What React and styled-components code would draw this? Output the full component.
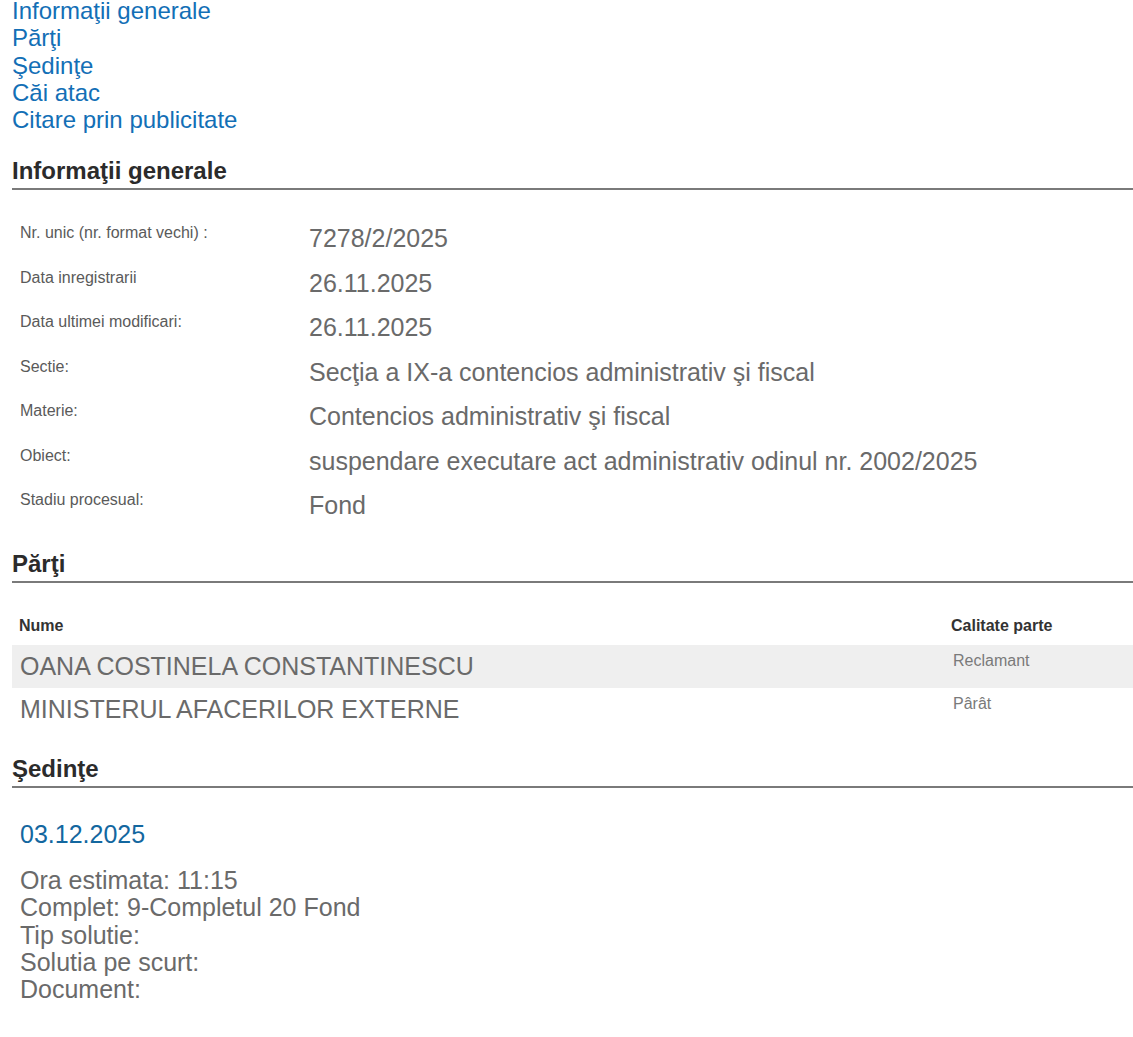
import React from 'react';
import styled, { createGlobalStyle } from 'styled-components';

const GlobalStyle = createGlobalStyle`
  html, body {
    margin: 0;
    padding: 0;
    background: #fff;
  }
  body {
    font-family: "Liberation Sans", Arial, Helvetica, sans-serif;
    overflow: hidden;
  }
`;

const info = [
  ['Nr. unic (nr. format vechi) :', '7278/2/2025'],
  ['Data inregistrarii', '26.11.2025'],
  ['Data ultimei modificari:', '26.11.2025'],
  ['Sectie:', 'Secţia a IX-a contencios administrativ şi fiscal'],
  ['Materie:', 'Contencios administrativ şi fiscal'],
  ['Obiect:', 'suspendare executare act administrativ odinul nr. 2002/2025'],
  ['Stadiu procesual:', 'Fond'],
];

const parti = [
  { nume: 'OANA COSTINELA CONSTANTINESCU', calitate: 'Reclamant' },
  { nume: 'MINISTERUL AFACERILOR EXTERNE', calitate: 'Pârât' },
];

const sedinta = [
  'Ora estimata: 11:15',
  'Complet: 9-Completul 20 Fond',
  'Tip solutie:',
  'Solutia pe scurt:',
  'Document:',
];

const App = () => {
  return (
    <Page>
      <GlobalStyle />
      <Nav>
        <NavLink href="#info">Informaţii generale</NavLink>
        <NavLink href="#parti">Părţi</NavLink>
        <NavLink href="#sedinte">Şedinţe</NavLink>
        <NavLink href="#cai">Căi atac</NavLink>
        <NavLink href="#citare">Citare prin publicitate</NavLink>
      </Nav>

      <SectionTitle id="info" $gap={24}>Informaţii generale</SectionTitle>
      <InfoTable>
        {info.map(([label, value]) => (
          <InfoRow key={label}>
            <InfoLabel>{label}</InfoLabel>
            <InfoValue>{value}</InfoValue>
          </InfoRow>
        ))}
      </InfoTable>

      <SectionTitle id="parti" $gap={22}>Părţi</SectionTitle>
      <PartiTable>
        <PartiHead>
          <HeadCell>Nume</HeadCell>
          <HeadCell>Calitate parte</HeadCell>
        </PartiHead>
        {parti.map((p, index) => (
          <PartiRow key={p.nume} $shaded={index % 2 === 0}>
            <PartiName>{p.nume}</PartiName>
            <PartiRole>{p.calitate}</PartiRole>
          </PartiRow>
        ))}
      </PartiTable>

      <SectionTitle id="sedinte" $gap={24}>Şedinţe</SectionTitle>
      <Sedinta>
        <SedintaDate>03.12.2025</SedintaDate>
        <SedintaDetails>
          {sedinta.map(line => (
            <DetailLine key={line}>{line}</DetailLine>
          ))}
        </SedintaDetails>
      </Sedinta>
    </Page>
  );
};

export default App;

const Page = styled.div`
  padding-left: 12px;
  width: 1121px;
  height: 1037px;
  margin-top: -3px;
`;

const Nav = styled.div`
  display: flex;
  flex-direction: column;
  align-items: flex-start;
`;

const NavLink = styled.a`
  font-size: 24px;
  line-height: 27.3px;
  color: #136fb6;
  text-decoration: none;
`;

const SectionTitle = styled.div`
  font-size: 24px;
  font-weight: 700;
  line-height: 28px;
  color: #2b2b2b;
  margin-top: ${({ $gap }) => $gap}px;
  padding-bottom: 3px;
  border-bottom: 2px solid #7a7a7a;
`;

const InfoTable = styled.div`
  margin-top: 26px;
  display: flex;
  flex-direction: column;
`;

const InfoRow = styled.div`
  display: grid;
  grid-template-columns: 297px 1fr;
  align-items: start;
  height: 44.5px;
  box-sizing: border-box;
  padding-top: 8px;
`;

const InfoLabel = styled.div`
  padding-left: 8px;
  font-size: 16px;
  line-height: 18px;
  color: #5a5a5a;
`;

const InfoValue = styled.div`
  font-size: 25px;
  line-height: 29px;
  color: #6a6a6a;
`;

const PartiTable = styled.div`
  margin-top: 34px;
  display: flex;
  flex-direction: column;
`;

const PartiHead = styled.div`
  display: grid;
  grid-template-columns: 932px 1fr;
  height: 28px;
  padding-left: 7px;
`;

const HeadCell = styled.div`
  font-size: 16px;
  font-weight: 700;
  line-height: 18px;
  color: #333;
`;

const PartiRow = styled.div`
  display: grid;
  grid-template-columns: 933px 1fr;
  align-items: start;
  height: 43px;
  box-sizing: border-box;
  padding: 7px 0 0 8px;
  background: ${({ $shaded }) => ($shaded ? '#efefef' : 'transparent')};
`;

const PartiName = styled.div`
  font-size: 25px;
  line-height: 29px;
  color: #6a6a6a;
`;

const PartiRole = styled.div`
  font-size: 16px;
  line-height: 18px;
  color: #7a7a7a;
`;

const Sedinta = styled.div`
  padding-left: 8px;
  margin-top: 32px;
`;

const SedintaDate = styled.div`
  font-size: 25px;
  line-height: 29px;
  color: #13679f;
`;

const SedintaDetails = styled.div`
  margin-top: 18px;
`;

const DetailLine = styled.div`
  font-size: 25px;
  line-height: 27.3px;
  color: #6a6a6a;
`;
